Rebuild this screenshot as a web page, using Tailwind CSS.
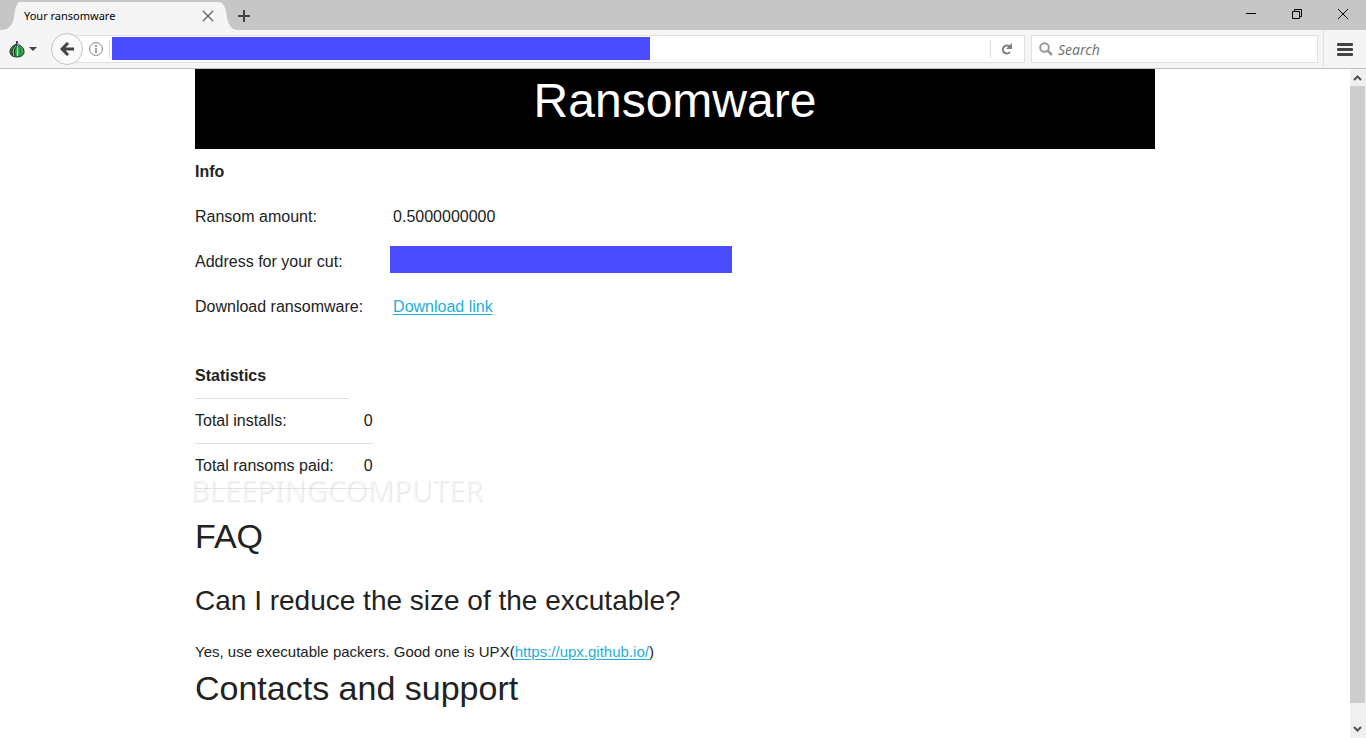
<!DOCTYPE html>
<html lang="en">
<head>
  <meta charset="UTF-8">
  <meta name="viewport" content="width=device-width, initial-scale=1.0">
  <title>Your ransomware</title>
  <script src="https://cdn.jsdelivr.net/npm/@tailwindcss/browser@4"></script>
</head>
<body class="h-screen flex flex-col overflow-hidden bg-white text-[#222] font-['Liberation_Sans',Arial,sans-serif]">

  <!-- Tab strip -->
  <div class="flex h-[30px] shrink-0 bg-[#c6c6c6] font-['Noto_Sans',sans-serif]">
    <div class="flex">
      <svg class="w-5 h-[30px]" viewBox="0 0 20 30" fill="#f5f5f5"><path d="M0 30C9 30 12 26 14 18C15 8 17 2 20 2V30Z"/></svg>
      <div class="flex items-center justify-between w-[198px] mt-[2px] pl-1 pr-1 bg-[#f5f5f5] text-black">
        <span class="text-[11px]">Your ransomware</span>
        <button aria-label="Close tab">
          <svg class="w-3 h-3" viewBox="0 0 12 12" stroke="#5a5a5a" stroke-width="1.2"><path d="M1 1L11 11M11 1L1 11"/></svg>
        </button>
      </div>
      <svg class="w-5 h-[30px] -scale-x-100" viewBox="0 0 20 30" fill="#f5f5f5"><path d="M0 30C6 30 9 26 11 18C12 8 14 2 20 2V30Z"/></svg>
    </div>
    <button class="pt-[2px]" aria-label="New tab">
      <svg class="w-3 h-3" viewBox="0 0 12 12" stroke="#444" stroke-width="2"><path d="M6 0V12M0 6H12"/></svg>
    </button>
    <!-- Window controls -->
    <div class="flex items-center gap-9 ml-auto pb-[2px] pr-[18px]">
      <button aria-label="Minimize"><svg class="w-[10px] h-[10px]" viewBox="0 0 10 10" stroke="#000"><path d="M0 4.500H10"/></svg></button>
      <button aria-label="Restore"><svg class="w-[10px] h-[10px]" viewBox="0 0 10 10" fill="none" stroke="#000"><path d="M.5 2.500H7.500V9.500H.5ZM2.500 2.500V.5H9.500V7.500H7.500"/></svg></button>
      <button aria-label="Close"><svg class="w-[10px] h-[10px]" viewBox="0 0 10 10" stroke="#000"><path d="M0 0L10 10M10 0L0 10"/></svg></button>
    </div>
  </div>

  <!-- Navigation bar -->
  <div class="flex items-center h-[39px] shrink-0 bg-[#f5f5f5] border-b border-[#c0c0c0] font-['Noto_Sans',sans-serif]">
    <button class="flex items-center gap-1 pl-[9px]" aria-label="Onion menu">
      <svg class="w-4 h-[18px]" viewBox="0 0 16 18">
        <path d="M8 4C5 5 1 7 1 12C1 15 4 17 8 17C12 17 15 15 15 12C15 7 11 5 8 4Z" fill="#35a84f" stroke="#1d2b25"/>
        <path d="M7.500 5C3 8 2 12 4 16M7.500 6C5 9 5 13 6.500 16" fill="none" stroke="#17351f" stroke-width="1.200"/>
        <path d="M7 6C4 9 3.500 12 5 16" fill="none" stroke="#8fd39a"/>
        <path d="M8.500 6V16" fill="none" stroke="#b9d8b8"/>
        <path d="M9.500 6C12 9 12 13 10.500 16" fill="none" stroke="#1f6d33"/>
        <path d="M8 1V6" stroke="#4a3b66" stroke-width="2"/>
        <path d="M9 3V6" stroke="#b3a9c8"/>
      </svg>
      <svg class="w-2 h-1" viewBox="0 0 8 4" fill="#444"><path d="M0 0H8L4 4Z"/></svg>
    </button>
    <button class="relative z-10 flex items-center justify-center w-8 h-8 ml-[14px] rounded-full bg-[#fafafa] border border-[#c4c4c4]" aria-label="Back">
      <svg class="w-[14px] h-[14px]" viewBox="0 0 14 14" fill="none" stroke="#444" stroke-width="3"><path d="M8 1L2 7L8 13M2 7H14"/></svg>
    </button>
    <div class="flex items-center flex-1 h-7 -ml-2 pl-[13px] bg-white border border-[#e0e0e0]">
      <svg class="w-[14px] h-[14px]" viewBox="0 0 14 14" fill="none" stroke="#808080"><circle cx="7" cy="7" r="6.400"/><path d="M7 6V11M7 3V5" stroke-width="1.500"/></svg>
      <div class="w-px h-[18px] ml-[6px] mr-[2px] bg-[#ddd]"></div>
      <input class="w-[538px] h-[23px] mb-[2px] bg-[#4c4cff] outline-none" type="text" aria-label="Address" readonly>
      <div class="w-px h-[18px] ml-auto bg-[#ddd]"></div>
      <button class="pl-[10px] pr-3" aria-label="Reload">
        <svg class="w-[11px] h-3" viewBox="0 0 11 12"><path d="M8.500 3.500A4 4 0 1 0 9 9" fill="none" stroke="#808080" stroke-width="2"/><path d="M11 0V6H5Z" fill="#808080"/></svg>
      </button>
    </div>
    <div class="flex items-center gap-[5px] w-[287px] h-7 ml-[6px] pl-[7px] bg-white border border-[#e0e0e0]">
      <svg class="w-[14px] h-[14px]" viewBox="0 0 14 14" fill="none" stroke="#999" stroke-width="2"><circle cx="5.500" cy="5.500" r="4.300"/><path d="M8.500 8.500L13 13" stroke-width="2.500"/></svg>
      <input class="flex-1 min-w-0 text-[14px] italic outline-none placeholder:text-[#757575]" type="text" placeholder="Search" aria-label="Search">
    </div>
    <div class="w-px h-full ml-[5px] bg-[#e2e2e2]"></div>
    <button class="px-[13px]" aria-label="Open menu">
      <svg class="w-4 h-[13px]" viewBox="0 0 16 13" fill="#444"><rect width="16" height="3" rx="1"/><rect y="5" width="16" height="3" rx="1"/><rect y="10" width="16" height="3" rx="1"/></svg>
    </button>
  </div>

  <!-- Page -->
  <div class="flex flex-1 min-h-0">
    <main class="flex-1 overflow-hidden">
      <div class="relative max-w-[960px] mx-auto">
        <h1 class="h-20 pt-1 bg-black text-white text-center text-[48px] leading-[56px]">Ransomware</h1>

        <table class="text-base leading-6">
          <thead>
            <tr class="h-[45px]"><th class="text-left">Info</th></tr>
          </thead>
          <tbody>
            <tr class="h-[45px]"><td class="pr-[30px]">Ransom amount:</td><td>0.5000000000</td></tr>
            <tr class="h-[45px]"><td class="pr-[30px]">Address for your cut:</td><td class="align-top pt-[7px]"><div class="w-[342px] h-[27px] -ml-[3px] bg-[#4c4cff]"></div></td></tr>
            <tr class="h-[45px]"><td class="pr-[30px]">Download ransomware:</td><td><a class="text-[#1eaedb] underline underline-offset-2" href="#">Download link</a></td></tr>
          </tbody>
        </table>

        <table class="mt-[25px] border-separate border-spacing-0 text-base leading-6">
          <thead>
            <tr class="h-[45px]"><th class="text-left border-b border-[#e1e1e1]">Statistics</th></tr>
          </thead>
          <tbody>
            <tr class="h-[45px]"><td class="pr-[15px] border-b border-[#e1e1e1]">Total installs:</td><td class="pl-[15px] border-b border-[#e1e1e1]">0</td></tr>
            <tr class="h-[45px]"><td class="pr-[15px] border-b border-[#e1e1e1]">Total ransoms paid:</td><td class="pl-[15px] border-b border-[#e1e1e1]">0</td></tr>
          </tbody>
        </table>

        <!-- Watermark -->
        <div class="absolute top-[409px] -left-[5px] text-[29px] leading-6 text-white/60 text-shadow-[1px_1px_1px_#0000001c] font-['Noto_Sans',sans-serif]">BLEEPINGCOMPUTER</div>

        <h2 class="mt-[25px] text-[34px] leading-[45px]">FAQ</h2>
        <h3 class="mt-[22px] text-[28px] leading-[39px]">Can I reduce the size of the excutable?</h3>
        <p class="mt-5 text-[15px] leading-6">Yes, use executable packers. Good one is UPX(<a class="text-[#1eaedb] underline underline-offset-2" href="https://upx.github.io/">https://upx.github.io/</a>)</p>
        <h2 class="text-[34px] leading-[48px]">Contacts and support</h2>
      </div>
    </main>

    <!-- Scrollbar -->
    <div class="flex flex-col items-center w-4 bg-[#f0f0f0]">
      <svg class="w-4 h-[17px]" viewBox="0 0 16 17" fill="none" stroke="#505050" stroke-width="2"><path d="M4 11L7.500 7.500L11 11"/></svg>
      <div class="flex-1 w-[15px] mr-px bg-[#cdcdcd]"></div>
      <div class="h-[18px]"></div>
      <svg class="w-4 h-[17px]" viewBox="0 0 16 17" fill="none" stroke="#505050" stroke-width="2"><path d="M4 6L7.500 9.500L11 6"/></svg>
    </div>
  </div>
</body>
</html>
